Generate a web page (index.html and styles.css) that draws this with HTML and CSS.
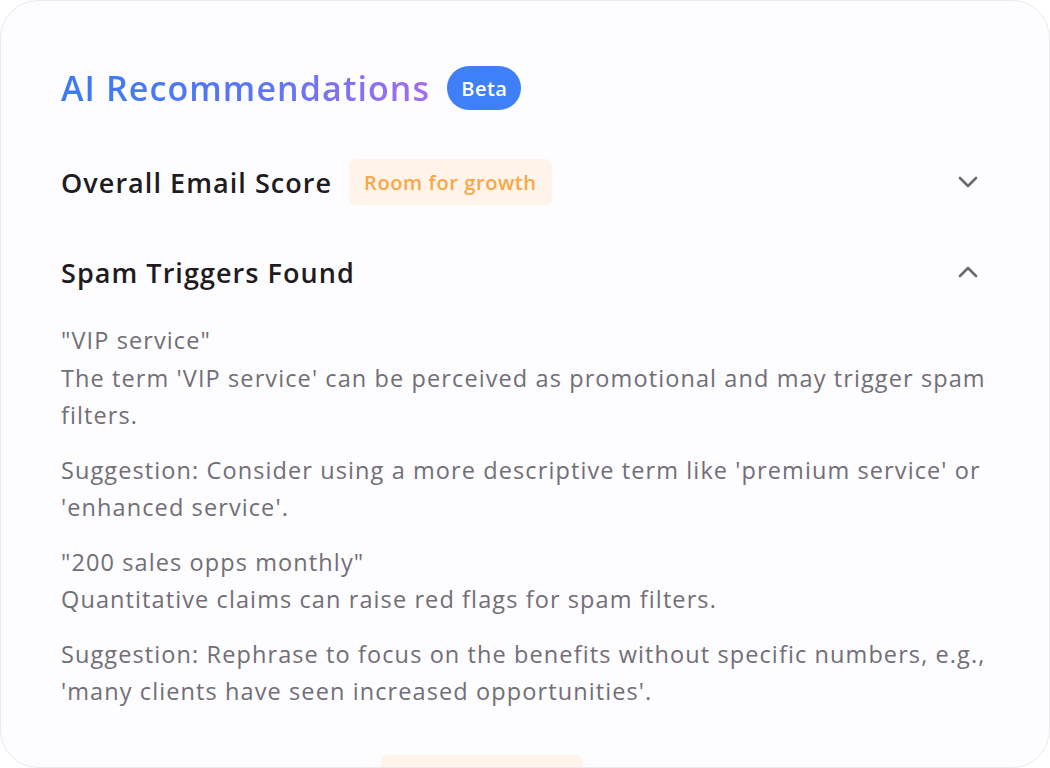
FILE: index.html
```html
<!DOCTYPE html>
<html lang="en">
<head>
<meta charset="utf-8">
<title>AI Recommendations</title>
<link rel="stylesheet" href="styles.css">
</head>
<body>
<div class="card">
  <div class="header">
    <h1 class="title">AI Recommendations</h1>
    <span class="beta">Beta</span>
  </div>
  <div class="sections">
    <div class="section">
      <div class="row">
        <h2 class="row-title">Overall Email Score</h2>
        <span class="tag">Room for growth</span>
        <svg class="chev" width="20" height="14" viewBox="0 0 20 14"><path d="M2 3 L10 11 L18 3" fill="none" stroke="#6b6870" stroke-width="2.6" stroke-linecap="round" stroke-linejoin="round"/></svg>
      </div>
    </div>
    <div class="section">
      <div class="row">
        <h2 class="row-title">Spam Triggers Found</h2>
        <svg class="chev" width="20" height="14" viewBox="0 0 20 14"><path d="M2 11 L10 3 L18 11" fill="none" stroke="#6b6870" stroke-width="2.6" stroke-linecap="round" stroke-linejoin="round"/></svg>
      </div>
      <div class="content">
        <p>"VIP service"<br>The term 'VIP service' can be perceived as promotional and may trigger spam filters.</p>
        <p>Suggestion: Consider using a more descriptive term like 'premium service' or 'enhanced service'.</p>
        <p>"200 sales opps monthly"<br>Quantitative claims can raise red flags for spam filters.</p>
        <p>Suggestion: Rephrase to focus on the benefits without specific numbers, e.g., 'many clients have seen increased opportunities'.</p>
      </div>
    </div>
    <div class="section">
      <div class="row">
        <h2 class="row-title">Personalization Score</h2>
        <span class="tag">Room for growth</span>
        <svg class="chev" width="20" height="14" viewBox="0 0 20 14"><path d="M2 3 L10 11 L18 3" fill="none" stroke="#6b6870" stroke-width="2.6" stroke-linecap="round" stroke-linejoin="round"/></svg>
      </div>
    </div>
  </div>
</div>
</body>
</html>
```
FILE: styles.css
```css
* { box-sizing: border-box; }
html, body { margin: 0; padding: 0; background: #ffffff; }
body { font-family: "Open Sans", "Noto Sans", sans-serif; }
.card {
  width: 1050px;
  height: 768px;
  border: 1px solid #ece8f0;
  border-radius: 38px;
  background: #fdfcfe;
  padding: 64px 60px 0 60px;
  overflow: hidden;
}
.header { display: flex; align-items: center; gap: 17px; height: 46px; }
.title {
  margin: 0;
  font-size: 34px;
  font-weight: 600;
  letter-spacing: 1.1px;
  line-height: 46px;
  background: linear-gradient(90deg, #3a7af6 0%, #5b76f4 55%, #a56cf0 100%);
  -webkit-background-clip: text;
  background-clip: text;
  color: transparent;
}
.beta {
  display: inline-flex; align-items: center; justify-content: center;
  height: 44px; padding: 0 14px;
  border-radius: 22px;
  background: #3f7ff7;
  color: #fff;
  font-size: 20px; font-weight: 600; letter-spacing: 0.5px;
}
.sections { display: flex; flex-direction: column; gap: 44px; margin-top: 48px; }
.row { display: flex; align-items: center; height: 46px; gap: 17px; }
.row-title { margin: 0; font-size: 27px; font-weight: 600; letter-spacing: 1.05px; color: #1e1b22; }
.tag {
  display: inline-flex; align-items: center;
  height: 46px; padding: 0 15px;
  border-radius: 7px;
  background: #fff3ea;
  color: #f8a846;
  font-size: 20px; font-weight: 600; letter-spacing: 0.6px;
}
.chev { margin-left: auto; margin-right: 11px; }
.content { margin-top: 27px; }
.content p {
  margin: 0 0 17px 0;
  font-size: 23.5px;
  letter-spacing: 1.1px;
  line-height: 37.5px;
  color: #716e77;
}
.content p:last-child { margin-bottom: 0; }
```
